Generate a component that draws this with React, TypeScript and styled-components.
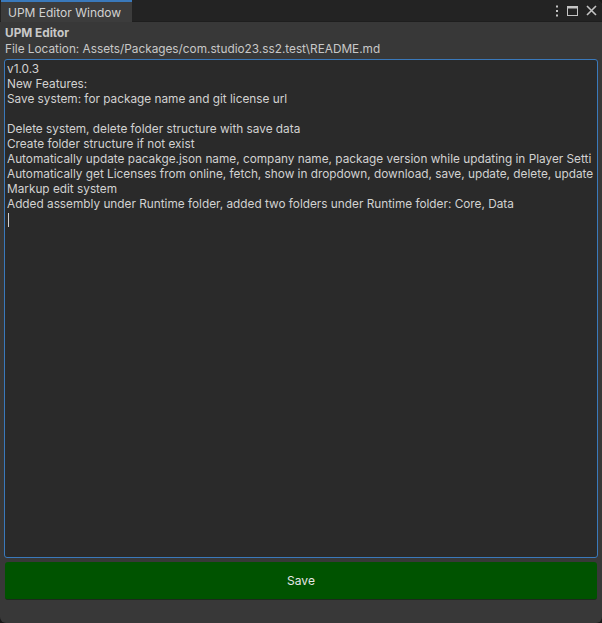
import React from "react";
import styled, { createGlobalStyle } from "styled-components";

const Global = createGlobalStyle`
  html, body { margin: 0; padding: 0; background: #191919; }
  body { font-family: Inter, "Noto Sans", sans-serif; }
  #root { width: 602px; height: 623px; }
`;

const Window = styled.div`
  width: 602px;
  height: 623px;
  display: flex;
  flex-direction: column;
  background: #383838;
  border-radius: 0 6px 6px 6px;
  overflow: hidden;
`;

const TabBar = styled.div`
  height: 22px;
  display: flex;
  align-items: stretch;
  background: #232323;
  border-bottom: 1px solid #1e1e1e;
  box-sizing: border-box;
  padding-left: 1px;
`;

const Tab = styled.div`
  width: 131px;
  box-sizing: border-box;
  background: #3c3c3c;
  border-top: 2px solid #3a79bb;
  color: #d2d2d2;
  font-size: 12px;
  display: flex;
  align-items: center;
  padding-left: 7px;
  margin-bottom: -1px;
`;

const TabSpacer = styled.div`
  flex: 1;
`;

const TabIcons = styled.div`
  display: flex;
  align-items: center;
  gap: 8px;
  padding-right: 5px;
  color: #c4c4c4;
`;

const Body = styled.div`
  flex: 1;
  display: flex;
  flex-direction: column;
  padding: 3px 4px 23px 4px;
  min-height: 0;
`;

const Title = styled.div`
  font-weight: 700;
  font-size: 11.8px;
  color: #c8c8c8;
  line-height: 16px;
  padding-left: 1px;
`;

const Location = styled.div`
  font-size: 11.8px;
  color: #c8c8c8;
  line-height: 17px;
  padding-left: 1px;
`;

const TextArea = styled.div`
  flex: 1;
  margin-top: 1px;
  background: #2a2a2a;
  border: 1px solid #3a79bb;
  border-radius: 3px;
  padding: 2px 0 0 2px;
  overflow: hidden;
  color: #d2d2d2;
  font-size: 11.8px;
  line-height: 15px;
  white-space: pre;
`;

const Line = styled.div`
  height: 15px;
  overflow: hidden;
  text-overflow: clip;
`;

const Caret = styled.span`
  display: inline-block;
  width: 1px;
  height: 14px;
  background: #d2d2d2;
  vertical-align: top;
  margin-left: 1px;
  margin-top: 1px;
`;

const SaveButton = styled.button`
  margin-top: 4px;
  margin-left: 1px;
  margin-right: 1px;
  height: 38px;
  background: #005300;
  border: none;
  border-bottom: 1px solid #1c2a1c;
  border-radius: 3px;
  color: #e6e6e6;
  font-family: Inter, "Noto Sans", sans-serif;
  font-size: 12px;
  cursor: pointer;
`;

const lines = [
  "v1.0.3",
  "New Features:",
  "Save system: for package name and git license url",
  "",
  "Delete system, delete folder structure with save data",
  "Create folder structure if not exist",
  "Automatically update pacakge.json name, company name, package version while updating in Player Setti",
  "Automatically get Licenses from online, fetch, show in dropdown, download, save, update, delete, update",
  "Markup edit system",
  "Added assembly under Runtime folder, added two folders under Runtime folder: Core, Data",
];

export default function App() {
  return (
    <>
      <Global />
      <Window>
        <TabBar>
          <Tab>UPM Editor Window</Tab>
          <TabSpacer />
          <TabIcons>
            <svg width="4" height="12" viewBox="0 0 4 12">
              <rect x="1" y="0.5" width="2" height="2" fill="#c4c4c4" />
              <rect x="1" y="5" width="2" height="2" fill="#c4c4c4" />
              <rect x="1" y="9.5" width="2" height="2" fill="#c4c4c4" />
            </svg>
            <svg width="11" height="10" viewBox="0 0 11 10">
              <rect x="0.5" y="0.5" width="10" height="9" fill="none" stroke="#c4c4c4" />
              <rect x="0.5" y="0.5" width="10" height="2" fill="#c4c4c4" />
            </svg>
            <svg width="11" height="11" viewBox="0 0 11 11">
              <path d="M1 1 L10 10 M10 1 L1 10" stroke="#c4c4c4" strokeWidth="1.6" />
            </svg>
          </TabIcons>
        </TabBar>
        <Body>
          <Title>UPM Editor</Title>
          <Location>File Location: Assets/Packages/com.studio23.ss2.test\README.md</Location>
          <TextArea>
            {lines.map((l, i) => (
              <Line key={i}>{l}</Line>
            ))}
            <Line>
              <Caret />
            </Line>
          </TextArea>
          <SaveButton>Save</SaveButton>
        </Body>
      </Window>
    </>
  );
}
